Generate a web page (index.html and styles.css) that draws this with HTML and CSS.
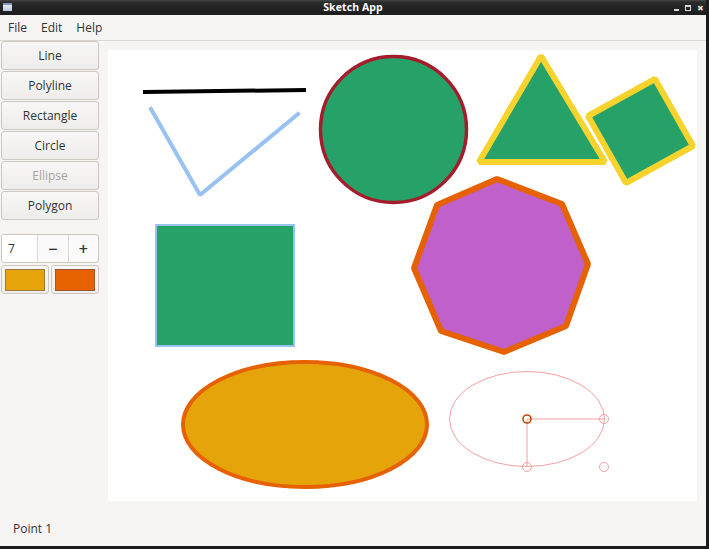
FILE: index.html
```html
<!DOCTYPE html>
<html>
<head>
<meta charset="utf-8">
<title>Sketch App</title>
<link rel="stylesheet" href="styles.css">
</head>
<body>
<div class="window">
  <div class="titlebar">
    <span class="win-icon"></span>
    <span class="title">Sketch App</span>
    <span class="controls">
      <span class="ctl-min"></span>
      <span class="ctl-max"></span>
      <span class="ctl-close">&#x2716;</span>
    </span>
  </div>
  <div class="menubar">
    <span class="menu-item">File</span>
    <span class="menu-item">Edit</span>
    <span class="menu-item">Help</span>
  </div>
  <div class="main">
    <div class="toolbar">
      <div class="tools">
        <button class="btn">Line</button>
        <button class="btn">Polyline</button>
        <button class="btn">Rectangle</button>
        <button class="btn">Circle</button>
        <button class="btn" disabled>Ellipse</button>
        <button class="btn">Polygon</button>
      </div>
      <div class="spin">
        <span class="spin-value">7</span>
        <span class="spin-btn">&minus;</span>
        <span class="spin-btn">+</span>
      </div>
      <div class="colors">
        <button class="color-btn"><span class="swatch swatch-fill"></span></button>
        <button class="color-btn"><span class="swatch swatch-stroke"></span></button>
      </div>
    </div>
    <div class="canvas-wrap">
      <svg class="canvas" width="589" height="451" viewBox="108 50 589 451" xmlns="http://www.w3.org/2000/svg">
        <rect x="108" y="50" width="589" height="451" fill="#ffffff"/>
        <line x1="145" y1="92" x2="304" y2="90" stroke="#000" stroke-width="4" stroke-linecap="square"/>
        <polyline points="151,109 200,195 298,114" fill="none" stroke="#99c1f1" stroke-width="4" stroke-linecap="square" stroke-linejoin="bevel"/>
        <circle cx="393.5" cy="129.5" r="73" fill="#26a269" stroke="#a51d2d" stroke-width="3.5"/>
        <polygon points="541,56 479,162 605,162" fill="#26a269" stroke="#f6d32d" stroke-width="6" stroke-linejoin="bevel"/>
        <polygon points="655,79 693,146 626,183 588,116" fill="#26a269" stroke="#f6d32d" stroke-width="6" stroke-linejoin="bevel"/>
        <polygon points="497,179 562,204 588,264 566,326 504,352 441,331 414,268 437,205" fill="#c061cb" stroke="#e66100" stroke-width="6" stroke-linejoin="bevel"/>
        <rect x="156" y="225" width="138" height="121" fill="#26a269" stroke="#99c1f1" stroke-width="2"/>
        <ellipse cx="305" cy="424.5" rx="122" ry="62.5" fill="#e5a50a" stroke="#e66100" stroke-width="4"/>
        <g fill="none" stroke="#f6a0a0" stroke-width="1">
          <ellipse cx="527" cy="419" rx="77.5" ry="47.5"/>
          <line x1="527" y1="419" x2="604" y2="419"/>
          <line x1="527" y1="419" x2="527" y2="467"/>
          <circle cx="604" cy="419" r="4.5"/>
          <circle cx="527" cy="467" r="4.5"/>
          <circle cx="604" cy="467" r="4.5"/>
        </g>
        <circle cx="527" cy="419" r="4" fill="none" stroke="#c64600" stroke-width="1.6"/>
      </svg>
    </div>
  </div>
  <div class="status">Point 1</div>
</div>
</body>
</html>
```

FILE: styles.css
```css
* {
  box-sizing: border-box;
}

html, body {
  margin: 0;
  padding: 0;
}

body {
  width: 709px;
  height: 549px;
  overflow: hidden;
  background: #1c1c1c;
  font-family: "Open Sans", "Noto Sans", sans-serif;
  font-size: 12px;
  color: #2e3436;
}

.window {
  width: 709px;
  height: 549px;
  display: flex;
  flex-direction: column;
  background: #f6f5f4;
  border-right: 3px solid #1b1b1b;
  border-bottom: 3px solid #1b1b1b;
}

.titlebar {
  height: 15px;
  flex: none;
  position: relative;
  display: flex;
  align-items: center;
  justify-content: center;
  background: linear-gradient(#474747 0, #2c2c2c 2px, #222 60%, #1d1d1d 100%);
  color: #fff;
}

.win-icon {
  position: absolute;
  left: 3px;
  top: 3px;
  width: 9px;
  height: 8px;
  background: linear-gradient(#e8eef6, #b7c6da);
  border-top: 2px solid #7f96b8;
}

.title {
  font-family: "Open Sans", "DejaVu Sans", sans-serif;
  font-weight: bold;
  font-size: 10.5px;
  line-height: 15px;
  letter-spacing: 0.1px;
}

.controls {
  position: absolute;
  right: 2px;
  top: 0;
  height: 15px;
  display: flex;
  align-items: center;
  gap: 6px;
}

.ctl-min {
  width: 5px;
  height: 2px;
  margin-top: 5px;
  background: #d8d8d8;
}

.ctl-max {
  width: 6px;
  height: 6px;
  border: 1px solid #d8d8d8;
  border-top-width: 2px;
}

.ctl-close {
  font-size: 8px;
  line-height: 8px;
  color: #d8d8d8;
}

.menubar {
  height: 26px;
  flex: none;
  display: flex;
  align-items: center;
  padding-left: 8px;
  gap: 14px;
  border-bottom: 1px solid #dad6d2;
  font-size: 12px;
  color: #2e3436;
}

.main {
  flex: none;
  height: 469px;
  display: flex;
}

.toolbar {
  width: 100px;
  flex: none;
  padding-left: 1px;
  display: flex;
  flex-direction: column;
}

.tools {
  display: flex;
  flex-direction: column;
  gap: 1px;
}

.btn {
  width: 98px;
  height: 29px;
  margin: 0;
  padding: 0 0 1px;
  border: 1px solid #cdc7c2;
  border-radius: 3px;
  background: linear-gradient(#f8f7f6, #efedec);
  font-family: "Open Sans", "Noto Sans", sans-serif;
  font-size: 12px;
  color: #2e3436;
}

.btn:disabled {
  color: #a4a4a4;
}

.spin {
  margin-top: 14px;
  width: 98px;
  height: 29px;
  display: flex;
  border: 1px solid #cdc7c2;
  border-radius: 3px;
  background: #fbfafa;
  overflow: hidden;
}

.spin-value {
  width: 35px;
  padding-left: 6px;
  display: flex;
  align-items: center;
  background: #ffffff;
  font-size: 12px;
}

.spin-btn {
  flex: 1;
  display: flex;
  align-items: center;
  justify-content: center;
  border-left: 1px solid #dcd8d4;
  font-size: 16px;
  font-weight: 600;
  color: #2e3436;
}

.colors {
  margin-top: 2px;
  display: flex;
  gap: 2px;
}

.color-btn {
  width: 48px;
  height: 29px;
  margin: 0;
  padding: 0 3px;
  display: flex;
  align-items: center;
  justify-content: center;
  border: 1px solid #cdc7c2;
  border-radius: 3px;
  background: linear-gradient(#f8f7f6, #efedec);
}

.swatch {
  width: 41px;
  height: 22px;
  border: 1px solid #8a6a3a;
}

.swatch-fill {
  background: #e5a50a;
  border-color: #9b7a40;
}

.swatch-stroke {
  background: #e66100;
  border-color: #9b5530;
}

.canvas-wrap {
  flex: 1;
  padding: 9px 9px 9px 8px;
}

.canvas {
  display: block;
  background: #fff;
}

.status {
  flex: 1;
  display: flex;
  align-items: center;
  padding-left: 13px;
  font-size: 12px;
  color: #2e3436;
}
```
